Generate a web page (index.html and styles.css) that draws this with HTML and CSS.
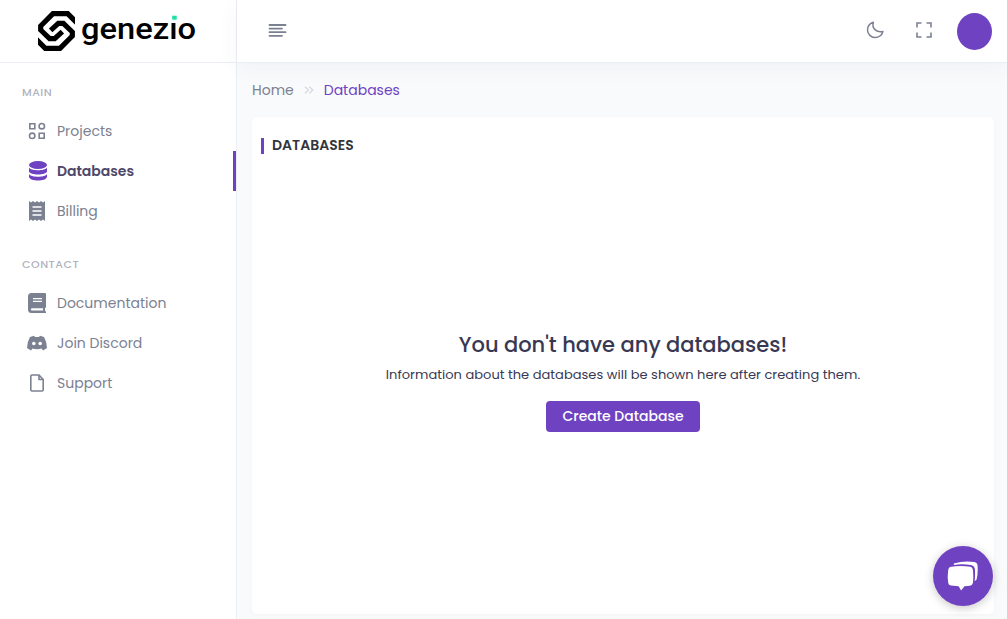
FILE: index.html
```html
<!DOCTYPE html>
<html lang="en">
<head>
<meta charset="utf-8">
<title>Genezio - Databases</title>
<link rel="stylesheet" href="styles.css">
</head>
<body>
<div class="app">
  <aside class="sidebar">
    <a class="brand">
      <svg class="brand-mark" viewBox="54 33 111 120" fill="none" stroke="#000" stroke-width="15.500"><path d="M170 68 143 41H99L62 78V90L89 116H104L127 95"/><path d="M49 118 76 145H120L157 108V96L130 70H115L92 91"/></svg>
      <svg class="brand-name" viewBox="0 0 118 40"><text x="1" y="28" textLength="115" lengthAdjust="spacingAndGlyphs">genezio</text><path fill="#fff" d="M88 2h13v9.800H88z"/><path fill="#1ee0a5" d="M92.200 4.700h4.500v4h-4.500z"/></svg>
    </a>
    <nav class="menu">
      <h6 class="menu-label">MAIN</h6>
      <a class="item"><svg viewBox="0 0 20 20" fill="none" stroke="currentColor" stroke-width="1.600"><path d="M2.800 2.800h5v5h-5zM12.200 12.200h5v5h-5z"/><circle cx="14.800" cy="5.200" r="2.700"/><circle cx="5.200" cy="14.800" r="2.700"/></svg><span>Projects</span></a>
      <a class="item active"><svg viewBox="0 0 20 20" fill="currentColor"><ellipse cx="11" cy="4" rx="9" ry="4"/><path d="M2 6.500c2 3.700 16 3.700 18 0v4c-1 4-17 4-18 0zM2 13c2 3.700 16 3.700 18 0v3c-1 4.700-17 4.700-18 0z"/></svg><span>Databases</span></a>
      <a class="item"><svg viewBox="0 0 20 20"><path fill="currentColor" d="m2 0 2 1.500L6 0l2 1.500L10 0l2 1.500L14 0l2 1.500L18 0v20l-2-1.500-2 1.500-2-1.500-2 1.500-2-1.500L6 20l-2-1.500L2 20z"/><path stroke="#fff" stroke-width="1.400" d="M5.500 6h9M5.500 10h9M5.500 14h9"/></svg><span>Billing</span></a>
      <h6 class="menu-label second">CONTACT</h6>
      <a class="item"><svg viewBox="0 0 20 20"><path fill="currentColor" d="M4.500 0H18q1 0 1 1v13.500l-1 .5v3l1 .6V20H4.500Q1 20 1 16.500v-13Q1 0 4.500 0z"/><path stroke="#fff" stroke-width="1.200" d="M6 5.600h9M6 8.400h9"/><path fill="#fff" d="M4.800 15.200H16v2.300H4.800q-2-1.100 0-2.300z"/></svg><span>Documentation</span></a>
      <a class="item"><svg viewBox="0 0 20 20"><path fill="currentColor" d="M7 2.700 8 4h4l1-1.300 4 1.300q3 5 3 11l-4 2.500-1.500-2q-4.500 1.500-9 0L4 17.500 0 15Q0 9 3 4z"/><circle cx="6.800" cy="10.500" r="1.800" fill="#fff"/><circle cx="13.200" cy="10.500" r="1.800" fill="#fff"/></svg><span>Join Discord</span></a>
      <a class="item"><svg viewBox="0 0 20 20" fill="none" stroke="currentColor" stroke-width="1.600" stroke-linejoin="round"><path d="M12 2H5Q3.800 2 3.800 3.200v13.600Q3.800 18 5 18h10q1.200 0 1.200-1.200V6.500zV6.500h4.200"/></svg><span>Support</span></a>
    </nav>
  </aside>
  <div class="page">
    <header class="topbar">
      <svg class="burger" viewBox="0 0 18 13" stroke="currentColor" stroke-width="1.800" stroke-linecap="round"><path d="M1 1h16M1 4.600h12.500M1 8.200h16M1 11.800h12.500"/></svg>
      <div class="tools">
        <svg class="moon" viewBox="0 0 18 18" fill="none" stroke="currentColor" stroke-width="1.500" stroke-linejoin="round"><path d="M7.300 1.200A7.800 7.800 0 1 0 16.900 10.500Q12 11.500 9 8.600T7.300 1.200z"/></svg>
        <svg class="expand" viewBox="0 0 16 16" fill="none" stroke="currentColor" stroke-width="1.600"><path d="M1 5.500V1h4.500M10.500 1H15v4.500M15 10.500V15h-4.500M5.500 15H1v-4.500"/></svg>
        <span class="avatar"></span>
      </div>
    </header>
    <div class="crumbs"><span>Home</span><svg viewBox="0 0 10 8" fill="none" stroke="#d3d8e2" stroke-width="1.200"><path d="m1 .7 3.500 3.300L1 7.300M5.300.7 8.800 4 5.300 7.300"/></svg><span class="current">Databases</span></div>
    <main class="card">
      <h1 class="card-title">DATABASES</h1>
      <section class="empty">
        <h2>You don't have any databases!</h2>
        <p>Information about the databases will be shown here after creating them.</p>
        <button class="create">Create Database</button>
      </section>
    </main>
  </div>
</div>
<div class="chat"><svg viewBox="0 0 34 32" fill="#fff"><path d="M7 2.500Q17-.5 28 1q3.500.5 3.500 4 .7 7-1 14l-2 2q.8-7 .2-13Q28 4.500 24.500 4 15 2.800 7 4z"/><path d="M4 6q10-1.500 20 0 2.500.5 2.800 3.500.7 7 0 13-.5 2.500-3 3L18 26l-3.500 4.500L12 26l-8-.6q-2.500-.5-2.800-3-1-6 0-13Q1.500 6.500 4 6z"/></svg></div>
</body>
</html>
```
FILE: styles.css
```css
* { box-sizing: border-box; }
body { margin: 0; font-family: Poppins, Inter, "Open Sans", sans-serif; color: #383853; background: #f9fafb; overflow: hidden; }
h1, h2, h6, p { margin: 0; }
svg { display: block; flex: none; }
span, h1, h2, h6, p, button { white-space: nowrap; }
.app { display: flex; height: 619px; }
.sidebar { width: 237px; flex: none; background: #fff; border-right: 1px solid #ebedf4; }
.brand { display: flex; height: 63px; padding: 11px 0 0 38px; border-bottom: 1px solid #ebedf4; }
.brand-mark { width: 37px; height: 40px; }
.brand-name { width: 118px; height: 40px; margin-left: 5px; }
.brand-name text { font: 500 30px Roboto, sans-serif; }
.menu { padding-top: 19px; }
.menu-label { height: 20px; padding-left: 22px; font-size: 11px; line-height: 20px; font-weight: 500; letter-spacing: .5px; color: #b0b3be; margin-bottom: 9px; }
.menu-label.second { margin-top: 23px; }
.item { display: flex; align-items: center; height: 40px; padding-left: 27px; gap: 10px; font-size: 14px; color: #7b8191; }
.item svg { width: 20px; height: 20px; }
.active { color: #6f42c1; border-right: 3px solid #6f42c1; }
.active span { color: #4d4769; font-weight: 600; letter-spacing: -.03px; }
.page { flex: 1; min-width: 0; display: flex; flex-direction: column; }
.topbar { height: 63px; flex: none; display: flex; align-items: center; justify-content: space-between; padding: 0 15px 0 31px; background: #fff; border-bottom: 1px solid #ebedf4; color: #7b8191; box-shadow: 0 5px 20px rgba(70, 80, 140, .05); }
.burger { width: 19px; height: 13px; margin-bottom: 1px; }
.tools { display: flex; align-items: center; }
.moon { width: 18px; height: 18px; margin: 0 32px 2px 0; }
.expand { width: 16px; height: 16px; margin: 0 25px 2px 0; }
.avatar { width: 35px; height: 37px; border-radius: 50%; background: #6f42c1; }
.crumbs { height: 54px; flex: none; display: flex; align-items: center; padding-left: 15px; font-size: 14px; color: #7b8191; }
.crumbs svg { width: 10px; height: 8px; margin: 0 10px; }
.current { color: #6f42c1; }
.card { width: 742px; height: 497px; margin-left: 15px; border-radius: 5px; background: #fff; box-shadow: 0 1px 5px rgba(80, 90, 130, .04); padding: 21px 0 0 9px; }
.card-title { height: 16px; border-left: 3px solid #6f42c1; padding-left: 8px; font-size: 14px; line-height: 15px; font-weight: 600; color: #33353d; }
.empty { display: flex; flex-direction: column; align-items: center; padding: 176px 9px 0 0; }
.empty h2 { font-size: 21px; line-height: 30px; font-weight: 500; }
.empty p { font-size: 13px; line-height: 20px; letter-spacing: .03px; margin: 5px 0 16px; }
.create { width: 154px; height: 31px; border: 0; border-radius: 4px; background: #6f42c1; color: #fff; font: 500 14px Poppins, Inter, sans-serif; padding: 0; }
.chat { position: absolute; left: 933px; top: 546px; width: 60px; height: 60px; border-radius: 50%; background: #6f42c1; box-shadow: 0 2px 10px rgba(0, 0, 0, .22); padding: 15px 0 0 14px; }
.chat svg { width: 33px; height: 31px; }
```
